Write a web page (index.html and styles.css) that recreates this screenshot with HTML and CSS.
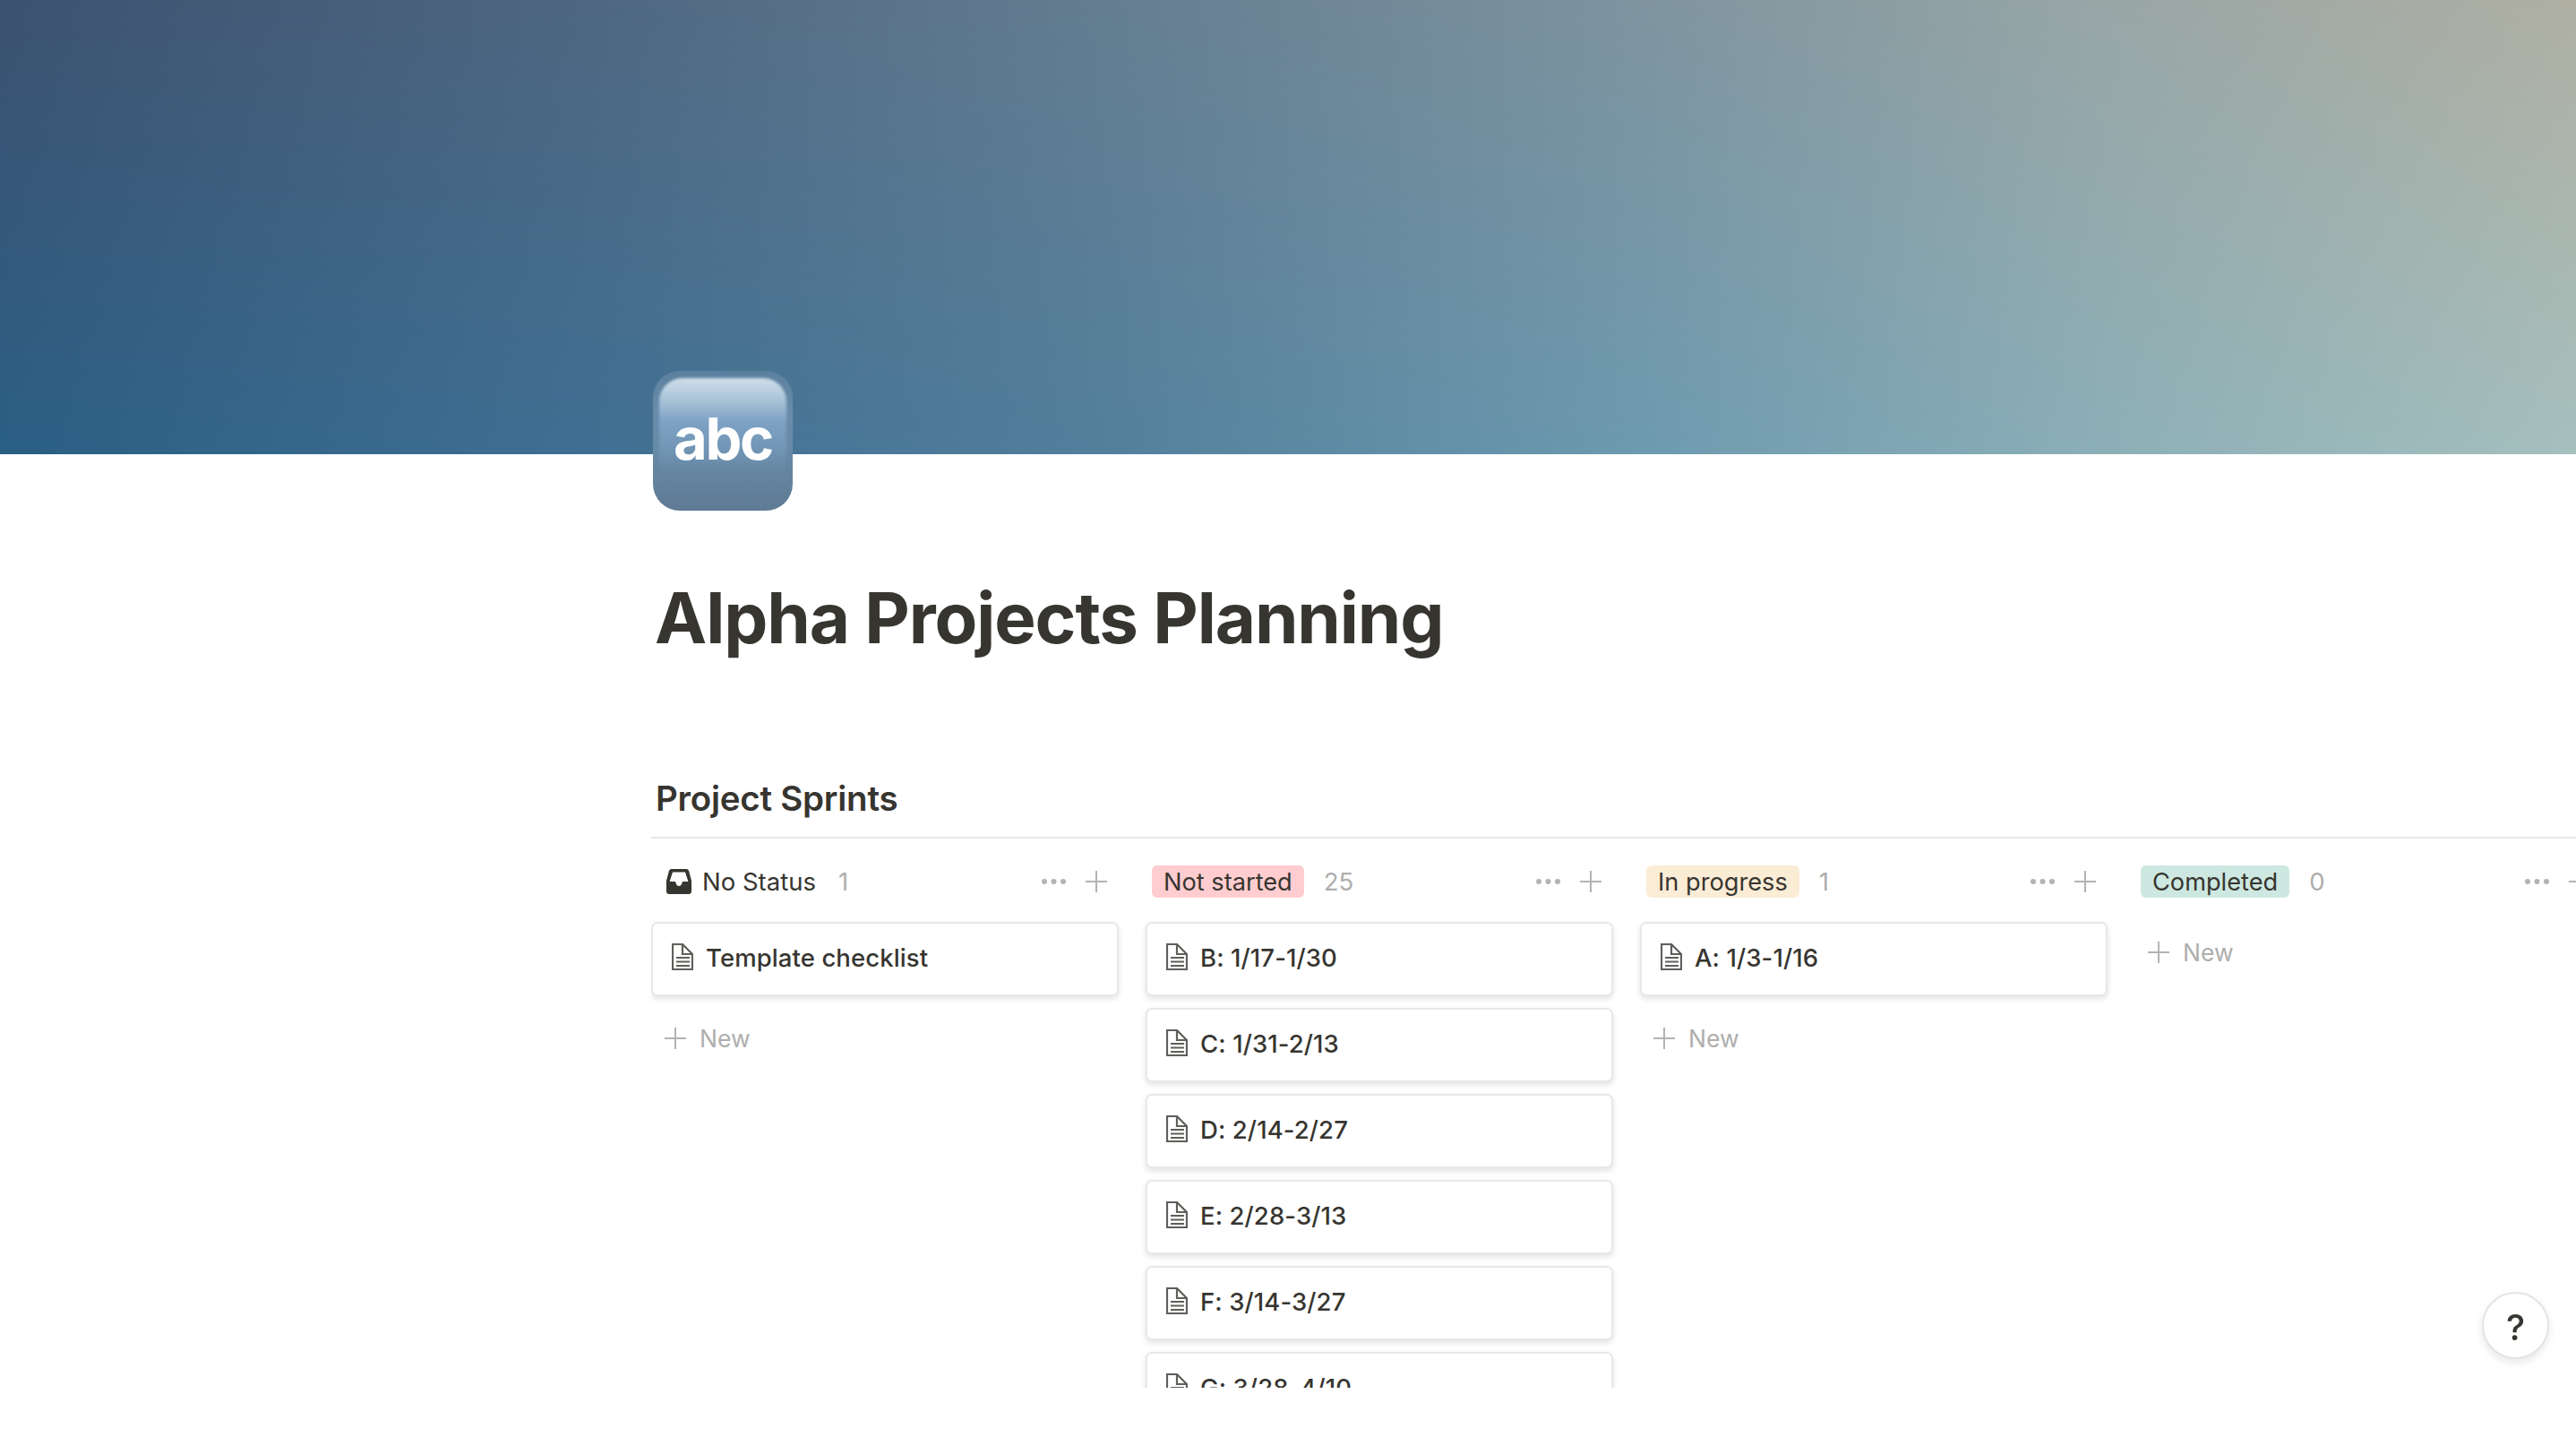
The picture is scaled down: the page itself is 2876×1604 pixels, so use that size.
FILE: index.html
```html
<!DOCTYPE html>
<html lang="en">
<head>
<meta charset="utf-8">
<title>Alpha Projects Planning</title>
<link rel="stylesheet" href="styles.css">
</head>
<body>
<svg class="defs" width="0" height="0" aria-hidden="true">
  <symbol id="doc" viewBox="0 0 24 30">
    <path d="M1 1h11l11 11v17H1z M12 1v11h11" fill="none" stroke="#5f5e5a" stroke-width="2.200"/>
    <path d="M5 16h15M5 20.500h15M5 25h15" fill="none" stroke="#5f5e5a" stroke-width="2.200"/>
  </symbol>
  <symbol id="plus" viewBox="0 0 24 24">
    <path d="M12 0v24M0 12h24" fill="none" stroke="currentColor" stroke-width="2"/>
  </symbol>
  <symbol id="dots" viewBox="0 0 29 8">
    <circle cx="4" cy="4" r="3"/><circle cx="14.500" cy="4" r="3"/><circle cx="25" cy="4" r="3"/>
  </symbol>
</svg>

<header class="cover"></header>

<main class="page">
  <div class="emoji"><span class="emoji-text">abc</span></div>
  <h1 class="title">Alpha Projects Planning</h1>
  <h2 class="view-title">Project Sprints</h2>
  <div class="rule"></div>

  <section class="board">
    <div class="col">
      <div class="col-head">
        <svg class="inbox" viewBox="0 0 28 28" aria-hidden="true">
          <path fill-rule="evenodd" fill="#373530" d="M6 0h16c1.500 0 2.600.8 3.100 2.200L28 13v12c0 1.700-1.300 3-3 3H3c-1.700 0-3-1.300-3-3V13L2.900 2.200C3.400.8 4.500 0 6 0zm1 3.500L3.600 14H9c.8 0 1.200.4 1.400 1.100.5 2.400 1.800 4 3.600 4s3.100-1.600 3.600-4c.2-.7.6-1.100 1.400-1.100h5.400L21 3.500z"/>
        </svg>
        <span class="plain-label">No Status</span>
        <span class="count">1</span>
        <span class="actions">
          <svg class="dots"><use href="#dots"/></svg>
          <svg class="plus"><use href="#plus"/></svg>
        </span>
      </div>
      <div class="card"><svg class="doc"><use href="#doc"/></svg><span>Template checklist</span></div>
      <div class="new"><svg class="plus"><use href="#plus"/></svg><span>New</span></div>
    </div>

    <div class="col">
      <div class="col-head tagged">
        <span class="tag red">Not started</span>
        <span class="count">25</span>
        <span class="actions">
          <svg class="dots"><use href="#dots"/></svg>
          <svg class="plus"><use href="#plus"/></svg>
        </span>
      </div>
      <div class="card"><svg class="doc"><use href="#doc"/></svg><span>B: 1/17-1/30</span></div>
      <div class="card"><svg class="doc"><use href="#doc"/></svg><span>C: 1/31-2/13</span></div>
      <div class="card"><svg class="doc"><use href="#doc"/></svg><span>D: 2/14-2/27</span></div>
      <div class="card"><svg class="doc"><use href="#doc"/></svg><span>E: 2/28-3/13</span></div>
      <div class="card"><svg class="doc"><use href="#doc"/></svg><span>F: 3/14-3/27</span></div>
      <div class="card"><svg class="doc"><use href="#doc"/></svg><span>G: 3/28-4/10</span></div>
    </div>

    <div class="col">
      <div class="col-head tagged">
        <span class="tag yellow">In progress</span>
        <span class="count">1</span>
        <span class="actions">
          <svg class="dots"><use href="#dots"/></svg>
          <svg class="plus"><use href="#plus"/></svg>
        </span>
      </div>
      <div class="card"><svg class="doc"><use href="#doc"/></svg><span>A: 1/3-1/16</span></div>
      <div class="new"><svg class="plus"><use href="#plus"/></svg><span>New</span></div>
    </div>

    <div class="col">
      <div class="col-head tagged">
        <span class="tag green">Completed</span>
        <span class="count">0</span>
        <span class="actions">
          <svg class="dots"><use href="#dots"/></svg>
          <svg class="plus"><use href="#plus"/></svg>
        </span>
      </div>
      <div class="new empty"><svg class="plus"><use href="#plus"/></svg><span>New</span></div>
    </div>
  </section>
</main>

<button class="help" type="button">?</button>
</body>
</html>
```

FILE: styles.css
```css
* { box-sizing: border-box; }
html, body { margin: 0; padding: 0; background: #fff; }
body {
  width: 2876px;
  height: 1604px;
  overflow: hidden;
  font-family: Inter, "Liberation Sans", sans-serif;
  color: #373530;
}
.defs { position: absolute; }

.cover {
  height: 507px;
  position: relative;
  background: linear-gradient(to right, #2b5f85 0%, #3f6f93 22%, #527f9c 42%, #6e9bb0 64%, #8db0b8 82%, #a6c0be 100%);
}
.cover::after {
  content: "";
  position: absolute;
  inset: 0;
  background: linear-gradient(to right, #3d5270 0%, #4e6680 22%, #637c90 42%, #7f949f 64%, #99a6a6 82%, #afafa2 100%);
  -webkit-mask-image: linear-gradient(to bottom, #000 0%, transparent 100%);
  mask-image: linear-gradient(to bottom, #000 0%, transparent 100%);
}

.page { padding-left: 727px; }

.emoji {
  position: relative;
  z-index: 1;
  width: 156px;
  height: 156px;
  margin: -93px 0 0 2px;
  border-radius: 30px;
  background: linear-gradient(to bottom, #5b809e 0%, #6a8cab 30%, #678aa6 60%, #5f7a94 100%);
  display: flex;
  align-items: center;
  justify-content: center;
  overflow: hidden;
}
.emoji::before {
  content: "";
  position: absolute;
  top: 8px;
  left: 7px;
  right: 7px;
  height: 105px;
  border-radius: 26px 26px 0 0;
  filter: blur(1.500px);
  background: linear-gradient(to bottom, #cfdeea 0%, #a9c2d8 24%, #7da2c4 46%, rgba(110,144,175,0) 100%);
}
.emoji-text {
  position: relative;
  color: #fff;
  font-family: Inter, "Liberation Sans", sans-serif;
  font-weight: 700;
  font-size: 65px;
  line-height: 1;
  letter-spacing: -2.400px;
  margin-bottom: 6px;
}

.title {
  margin: 74px 0 0 4px;
  font-size: 78px;
  line-height: 92px;
  font-weight: 700;
  letter-spacing: -1.100px;
  color: #373530;
}

.view-title {
  margin: 132px 0 0 5px;
  font-size: 38.500px;
  line-height: 46px;
  font-weight: 600;
  letter-spacing: -.25px;
  color: #373530;
}

.rule {
  height: 2px;
  margin-top: 20px;
  background: #e6e6e4;
}

.board {
  display: flex;
  gap: 30px;
  height: 613px;
  overflow: hidden;
  padding-top: 30px;
}
.col { flex: 0 0 522px; width: 522px; }

.col-head {
  display: flex;
  align-items: center;
  height: 36px;
  padding: 0 13px 0 17px;
  margin-bottom: 27px;
  font-size: 27.500px;
}
.col-head.tagged { padding-left: 7px; }
.inbox { width: 28px; height: 28px; flex: none; margin-right: 12px; }
.plain-label { line-height: 36px; margin-right: 3px; }
.tag {
  height: 36px;
  line-height: 37px;
  padding: 0 13px;
  border-radius: 6px;
  white-space: nowrap;
  font-size: 27.200px;
}
.red { background: #ffcdcf; }
.yellow { background: #fbecd6; }
.green { background: #cde8e1; }
.count { margin-left: 22px; color: #aeaeac; }
.actions {
  margin-left: auto;
  display: flex;
  align-items: center;
  gap: 21px;
  color: #b3b3b1;
}
.dots { width: 29px; height: 8px; fill: #b3b3b1; flex: none; }
.plus { width: 24px; height: 24px; flex: none; color: #b3b3b1; }

.card {
  display: flex;
  align-items: flex-start;
  height: 83px;
  margin-bottom: 13px;
  padding: 22px 0 0 21px;
  background: #fff;
  border: 2px solid #e8e8e6;
  border-radius: 7px;
  box-shadow: 0 3px 6px rgba(15,15,15,.12);
  font-size: 27.500px;
  font-weight: 500;
  line-height: 32px;
  letter-spacing: .1px;
  color: #373530;
}
.doc { width: 24px; height: 30px; flex: none; margin: 0 14px 0 0; }

.new {
  display: flex;
  align-items: center;
  height: 36px;
  margin-top: 29px;
  padding-left: 15px;
  gap: 15px;
  font-size: 26.500px;
  color: #aeaeac;
}
.new.empty { margin-top: 43px; }

.help {
  position: fixed;
  left: 2771px;
  top: 1442px;
  width: 75px;
  height: 75px;
  border-radius: 50%;
  background: #fff;
  border: 2px solid #e4e4e2;
  box-shadow: 0 4px 10px rgba(15,15,15,.1);
  font-family: Inter, "Liberation Sans", sans-serif;
  font-size: 40px;
  font-weight: 500;
  color: #373530;
  padding: 3px 0 0;
}
```
